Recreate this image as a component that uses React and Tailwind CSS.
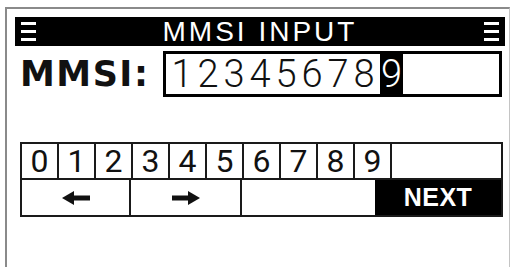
import React from 'react';

const lcd = { fontFamily: '"Liberation Sans", Arial, sans-serif' };
const thin = { fontFamily: 'Roboto, "Liberation Sans", sans-serif' };

function MenuIcon() {
  return (
    <div className="flex flex-col gap-[5px] w-[15px]">
      <div className="h-[3px] bg-white" />
      <div className="h-[3px] bg-white" />
      <div className="h-[3px] bg-white" />
    </div>
  );
}

function Arrow({ dir }) {
  return (
    <svg width="28" height="14" viewBox="0 0 28 14" className={dir === 'right' ? 'rotate-180' : ''}>
      <polygon points="0,7 12,0 12,14" fill="#111" />
      <rect x="10" y="4.5" width="18" height="5" fill="#111" />
    </svg>
  );
}

export default function App() {
  const entered = ['1', '2', '3', '4', '5', '6', '7', '8'];
  const keys = ['0', '1', '2', '3', '4', '5', '6', '7', '8', '9'];

  return (
    <div className="w-[515px] h-[267px] bg-white overflow-hidden">
      <div className="ml-[5px] mt-[7px] w-[505px] h-[260px] border-t-2 border-l-2 border-r border-[#8a8a8a] border-r-[#c4c4c4] flex flex-col">
        <div className="ml-[8px] mt-[8px] w-[490px] h-[29px] bg-black flex items-center justify-between px-[6px]">
          <MenuIcon />
          <span className="text-white text-[28px] leading-none tracking-[3px]" style={lcd}>
            MMSI INPUT
          </span>
          <MenuIcon />
        </div>

        <div className="mt-[5px] ml-[13px] flex items-start">
          <div
            className="w-[143px] h-[46px] flex items-center text-[35px] font-bold leading-none tracking-[1.5px] text-[#111]"
            style={{ fontFamily: '"DejaVu Sans", sans-serif' }}
          >
            MMSI:
          </div>
          <div className="w-[339px] h-[46px] border-[3px] border-black flex items-stretch pl-[3px]">
            {entered.map((d, i) => (
              <span
                key={i}
                className="w-[26px] flex items-center justify-center text-[38px] font-light leading-none text-[#111]"
                style={thin}
              >
                {d}
              </span>
            ))}
            <span
              className="ml-[3px] w-[23px] bg-black text-white flex items-center justify-center text-[38px] font-light leading-none"
              style={thin}
            >
              9
            </span>
          </div>
        </div>

        <div className="mt-[45px] ml-[13px] w-[483px] h-[75px] border-2 border-[#1a1a1a] flex flex-col">
          <div className="h-[36px] border-b-2 border-[#1a1a1a] flex">
            {keys.map((k) => (
              <div
                key={k}
                className="w-[37px] border-r-2 border-[#1a1a1a] flex items-center justify-center text-[32px] font-normal leading-none text-[#111]"
                style={thin}
              >
                {k}
              </div>
            ))}
            <div className="flex-1" />
          </div>
          <div className="flex-1 flex">
            <div className="w-[109px] border-r-2 border-[#1a1a1a] flex items-center justify-center">
              <Arrow dir="left" />
            </div>
            <div className="w-[111px] border-r-2 border-[#1a1a1a] flex items-center justify-center">
              <Arrow dir="right" />
            </div>
            <div className="w-[133px]" />
            <div
              className="flex-1 bg-black text-white flex items-center justify-center text-[25px] font-bold leading-none tracking-[0.5px]"
              style={lcd}
            >
              NEXT
            </div>
          </div>
        </div>
      </div>
    </div>
  );
}
